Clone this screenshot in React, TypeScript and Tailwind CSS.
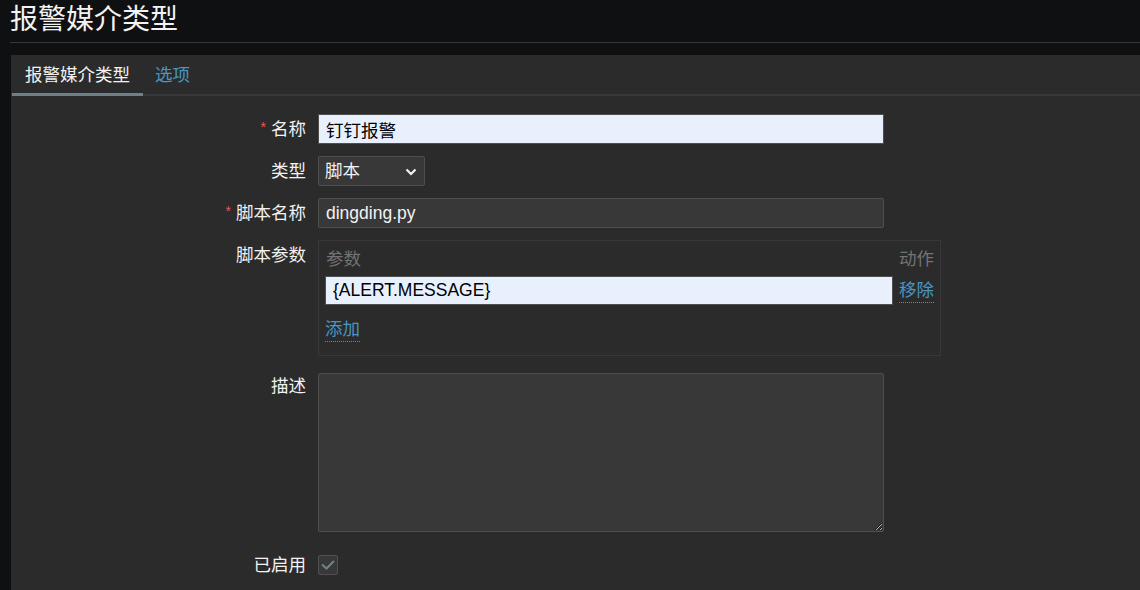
import React from "react"

const font = "font-['Liberation_Sans','Noto_Sans_CJK_SC',sans-serif]"

function Label({ text, required }: { text: string; required?: boolean }) {
  return (
    <div className="flex justify-end items-start leading-[30px] text-[#f2f2f2]">
      {required && <span className="text-[#e45959] text-[14px] leading-[26px] mr-[5px]">*</span>}
      <span>{text}</span>
    </div>
  )
}

function Chevron() {
  return (
    <svg width="12" height="8" viewBox="0 0 12 8" className="absolute right-[7px] top-[11px]">
      <path d="M1.5 1.5 L6 6 L10.5 1.5" stroke="#f2f2f2" strokeWidth="2.2" fill="none" />
    </svg>
  )
}

export default function App() {
  return (
    <div className={`min-h-[590px] bg-[#0e1012] text-[17.5px] ${font} overflow-hidden`}>
      <div className="ml-[10px] h-[43px] border-b border-[#383838]">
        <h1 className="text-[28px] leading-[40px] text-[#f2f2f2]">报警媒介类型</h1>
      </div>

      <div className="mt-[12px] ml-[11px] bg-[#2b2b2b] min-h-[536px]">
        <div className="flex h-[41px] border-b-2 border-[#383838]">
          <div className="px-[13px] leading-[40px] text-[#f2f2f2] border-b-[3px] border-[#6e8189] -mb-[2px] ml-px">报警媒介类型</div>
          <div className="px-[12px] leading-[40px] text-[#4796c4]">选项</div>
        </div>

        <div className="grid grid-cols-[295px_1fr] gap-x-[12px] gap-y-[12px] pt-[18px] pb-[20px]">
          <Label text="名称" required />
          <input
            readOnly
            defaultValue="钉钉报警"
            className="w-[566px] h-[30px] px-[7px] bg-[#e8f0fe] text-black border border-[#4f4f4f] outline-none"
          />

          <Label text="类型" />
          <div className="relative w-[107px] h-[30px] bg-[#383838] border border-[#4f4f4f] rounded-[2px] text-[#f2f2f2] px-[6px] leading-[28px]">
            脚本
            <Chevron />
          </div>

          <Label text="脚本名称" required />
          <input
            readOnly
            defaultValue="dingding.py"
            className="w-[566px] h-[30px] px-[7px] bg-[#383838] text-[#f2f2f2] border border-[#4f4f4f] rounded-[2px] outline-none"
          />

          <Label text="脚本参数" />
          <div className="w-[623px] h-[116px] border border-[#383838] pt-[5px] pl-[6px] pr-[6px]">
            <div className="grid grid-cols-[1fr_auto] gap-x-[6px]">
              <div className="leading-[26px] text-[#737373] pl-px">参数</div>
              <div className="leading-[26px] text-[#737373] text-right">动作</div>
              <input
                readOnly
                defaultValue="{ALERT.MESSAGE}"
                className="mt-[4px] h-[29px] px-[7px] bg-[#e8f0fe] text-black border border-[#4f4f4f] outline-none"
              />
              <div className="mt-[4px] h-[29px] flex items-center">
                <span className="text-[#4796c4] border-b border-dotted border-[#4796c4] leading-[23px] block">移除</span>
              </div>
            </div>
            <div className="mt-[13px] h-[24px] flex">
              <span className="text-[#4796c4] border-b border-dotted border-[#4796c4] leading-[23px] block">添加</span>
            </div>
          </div>

          <div className="pt-[3px]">
            <Label text="描述" />
          </div>
          <textarea
            readOnly
            defaultValue=""
            className="mt-[5px] w-[566px] h-[159px] bg-[#383838] border border-[#4f4f4f] rounded-[2px] outline-none resize"
          />

          <div className="pt-[6px]">
            <Label text="已启用" />
          </div>
          <div className="mt-[11px] w-[20px] h-[20px] bg-[#383838] border border-[#4f4f4f] rounded-[2px] flex items-center justify-center">
            <svg width="16" height="12" viewBox="0 0 16 12">
              <path d="M2 5.5 L6.5 9.5 L14 2" stroke="#6e8189" strokeWidth="2.2" fill="none" />
            </svg>
          </div>
        </div>
      </div>
    </div>
  )
}
